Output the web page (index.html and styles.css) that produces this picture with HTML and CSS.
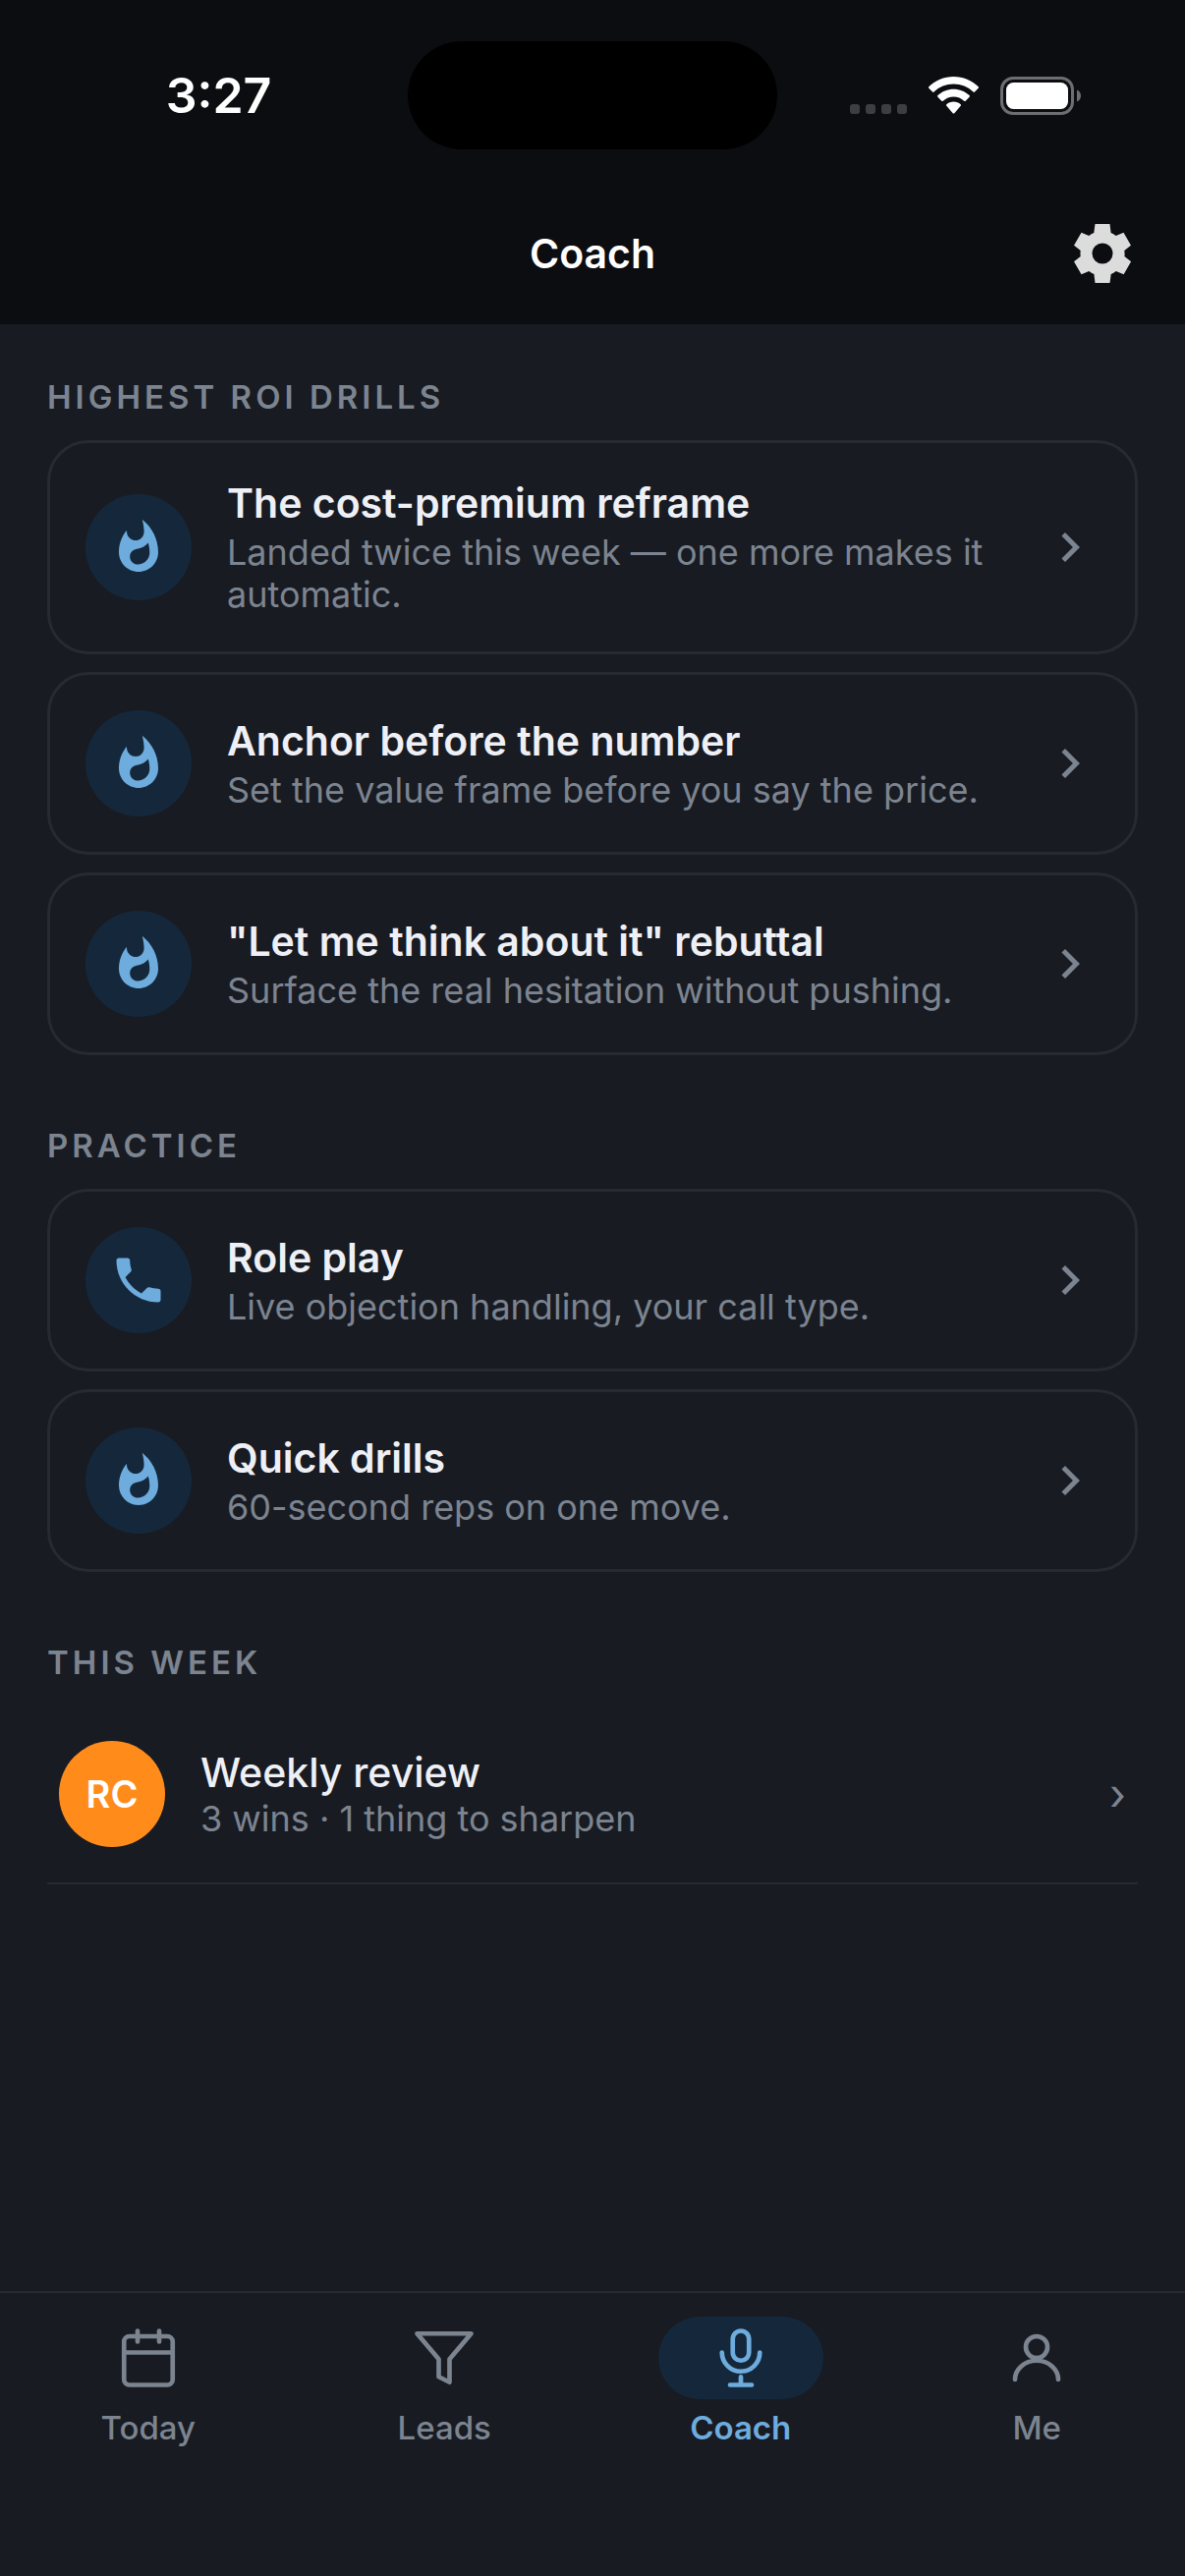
FILE: index.html
```html
<!DOCTYPE html>
<html lang="en">
<head>
    <meta charset="UTF-8">
    <meta name="viewport" content="width=device-width, initial-scale=1.0">
    <title>Coach</title>
    <link rel="stylesheet" href="styles.css">
</head>
<body>
    <!-- Shared icons -->
    <svg class="sprite" aria-hidden="true">
        <symbol id="flame" viewBox="0 0 24 24">
            <path d="M13.5.67s.74 2.65.74 4.8c0 2.06-1.35 3.73-3.41 3.73-2.07 0-3.63-1.67-3.63-3.73l.03-.36C5.21 7.51 4 10.62 4 14c0 4.42 3.58 8 8 8s8-3.58 8-8C20 8.61 17.41 3.8 13.5.67zM11.71 19c-1.78 0-3.22-1.4-3.22-3.14 0-1.62 1.05-2.76 2.81-3.12 1.77-.36 3.6-1.21 4.62-2.58.39 1.29.59 2.65.59 4.04 0 2.65-2.15 4.8-4.8 4.8z"/>
        </symbol>
        <symbol id="phone" viewBox="0 0 24 24">
            <path d="M6.62 10.79c1.44 2.83 3.76 5.14 6.59 6.59l2.2-2.2c.27-.27.67-.36 1.02-.24 1.12.37 2.33.57 3.57.57.55 0 1 .45 1 1V20c0 .55-.45 1-1 1-9.39 0-17-7.61-17-17 0-.55.45-1 1-1h3.5c.55 0 1 .45 1 1 0 1.25.2 2.45.57 3.57.11.35.03.74-.25 1.02l-2.2 2.2z"/>
        </symbol>
        <symbol id="chevron" viewBox="0 0 24 24">
            <path d="M10 6L8.59 7.41 13.17 12l-4.58 4.59L10 18l6-6z"/>
        </symbol>
    </svg>

    <header class="top">
        <div class="status-bar">
            <span class="time">3:27</span>
            <span class="island"></span>
            <span class="status-icons">
                <span class="signal"><i></i><i></i><i></i><i></i></span>
                <svg class="wifi" viewBox="0 0 51 38">
                    <path d="M25.5 0C35.2 0 44.2 3.8 50.7 10.2Q51.4 11 50.7 11.7L47 15.6Q46.3 16.3 45.5 15.6C40.1 10.4 33.1 7.6 25.5 7.6S10.900 10.4 5.5 15.6Q4.7 16.3 4 15.6L.3 11.7Q-.4 11 .3 10.2C6.8 3.8 15.8 0 25.5 0z"/>
                    <path d="M25.5 12.7C31.6 12.7 37.3 15 41.6 19.1Q42.4 19.9 41.6 20.7L37.7 24.7Q37 25.4 36.2 24.7C33.3 22 29.6 20.5 25.5 20.5S17.7 22 14.8 24.7Q14 25.4 13.3 24.7L9.4 20.7Q8.6 19.9 9.4 19.1C13.7 15 19.4 12.7 25.5 12.7z"/>
                    <path d="M25.5 25.4C28.3 25.4 30.8 26.4 32.7 28.2Q33.5 29 32.7 29.8L26.3 37.2Q25.5 38 24.7 37.2L18.3 29.8Q17.5 29 18.3 28.2C20.2 26.4 22.7 25.4 25.5 25.4z"/>
                </svg>
                <svg class="battery" viewBox="0 0 82 39">
                    <rect class="shell" x="1.5" y="1.5" width="72" height="36" rx="11.5"/>
                    <rect x="6" y="6" width="63" height="27" rx="7.5"/>
                    <path class="tip" d="M78 13.5c2.5 1 4 3.3 4 6s-1.5 5-4 6z"/>
                </svg>
            </span>
        </div>
        <div class="title-bar">
            <h1>Coach</h1>
            <button class="settings" aria-label="Settings">
                <svg viewBox="0 0 24 24"><path d="M19.5 12c0-.34-.03-.66-.07-.98l2.23-1.74-2.5-4.33-2.61 1.05c-.52-.4-1.08-.73-1.69-.98L14.5 2h-5l-.4 3.02c-.61.25-1.17.59-1.69.98L4.84 4.95l-2.5 4.33 2.23 1.74c-.04.32-.07.65-.07.98s.03.66.07.98l-2.23 1.74 2.5 4.33 2.61-1.05c.52.4 1.08.73 1.69.98L9.5 22h5l.4-3.02c.61-.25 1.17-.59 1.69-.98l2.61 1.05 2.5-4.33-2.23-1.74c.04-.32.07-.64.07-.98zM12 15.5a3.5 3.5 0 1 1 0-7 3.5 3.5 0 0 1 0 7z"/></svg>
            </button>
        </div>
    </header>

    <main>
        <section>
            <h2>HIGHEST ROI DRILLS</h2>
            <div class="cards">
                <a class="card" href="#">
                    <span class="badge"><svg><use href="#flame"/></svg></span>
                    <span class="text">
                        <strong>The cost-premium reframe</strong>
                        <small>Landed twice this week — one more makes it automatic.</small>
                    </span>
                    <svg class="chevron"><use href="#chevron"/></svg>
                </a>
                <a class="card" href="#">
                    <span class="badge"><svg><use href="#flame"/></svg></span>
                    <span class="text">
                        <strong>Anchor before the number</strong>
                        <small>Set the value frame before you say the price.</small>
                    </span>
                    <svg class="chevron"><use href="#chevron"/></svg>
                </a>
                <a class="card" href="#">
                    <span class="badge"><svg><use href="#flame"/></svg></span>
                    <span class="text">
                        <strong>"Let me think about it" rebuttal</strong>
                        <small>Surface the real hesitation without pushing.</small>
                    </span>
                    <svg class="chevron"><use href="#chevron"/></svg>
                </a>
            </div>
        </section>

        <section>
            <h2>PRACTICE</h2>
            <div class="cards">
                <a class="card" href="#">
                    <span class="badge"><svg><use href="#phone"/></svg></span>
                    <span class="text">
                        <strong>Role play</strong>
                        <small>Live objection handling, your call type.</small>
                    </span>
                    <svg class="chevron"><use href="#chevron"/></svg>
                </a>
                <a class="card" href="#">
                    <span class="badge"><svg><use href="#flame"/></svg></span>
                    <span class="text">
                        <strong>Quick drills</strong>
                        <small>60-second reps on one move.</small>
                    </span>
                    <svg class="chevron"><use href="#chevron"/></svg>
                </a>
            </div>
        </section>

        <section>
            <h2>THIS WEEK</h2>
            <a class="row" href="#">
                <span class="avatar">RC</span>
                <span class="text">
                    <strong>Weekly review</strong>
                    <small>3 wins · 1 thing to sharpen</small>
                </span>
                <span class="more">›</span>
            </a>
        </section>
    </main>

    <nav>
        <a href="#">
            <span class="pill"><svg viewBox="0 0 24 24"><rect x="3" y="4" width="18" height="18" rx="2"/><path d="M8 2v4M16 2v4M3 10h18"/></svg></span>
            Today
        </a>
        <a href="#">
            <span class="pill"><svg viewBox="0 0 24 24"><path d="M22 3H2l8 9.46V19l4 2v-8.54z"/></svg></span>
            Leads
        </a>
        <a class="active" href="#" aria-current="page">
            <span class="pill"><svg viewBox="0 0 24 24"><rect x="9" y="2" width="6" height="11" rx="3"/><path d="M5 10a7 7 0 0 0 14 0M12 19v3M8 22h8"/></svg></span>
            Coach
        </a>
        <a href="#">
            <span class="pill"><svg viewBox="0 0 24 24"><circle cx="12" cy="8" r="4"/><path d="M4 20a8 7 0 0 1 16 0"/></svg></span>
            Me
        </a>
    </nav>
</body>
</html>
```
FILE: styles.css
```css
* {
    box-sizing: border-box;
}
body {
    margin: 0;
    min-height: 100vh;
    display: flex;
    flex-direction: column;
    background: #181b22;
    color: #eef0f6;
    font-family: Inter, "Liberation Sans", sans-serif;
}
a {
    color: inherit;
    text-decoration: none;
}
.sprite {
    display: none;
}

/* Status bar and title */
.top {
    background: #0c0d10;
    color: #fff;
}
.status-bar {
    display: grid;
    grid-template-columns: 1fr 376px 1fr;
    align-items: center;
    padding: 42px 0 34px;
}
.time {
    padding-left: 30px;
    text-align: center;
    font-size: 50px;
    font-weight: 600;
}
.island {
    height: 110px;
    border-radius: 55px;
    background: #000;
}
.status-icons {
    display: flex;
    align-items: center;
    padding-left: 74px;
}
.signal {
    display: flex;
    gap: 6px;
    margin: 28px 22px 0 0;
}
.signal i {
    width: 10px;
    height: 10px;
    border-radius: 3px;
    background: #3d3e41;
}
.wifi {
    width: 51px;
    height: 38px;
    margin-right: 22px;
    fill: #fff;
}
.battery {
    width: 82px;
    height: 39px;
    fill: #fff;
}
.battery .shell {
    fill: none;
    stroke: #6d6e70;
    stroke-width: 3;
}
.battery .tip {
    fill: #6d6e70;
}
.title-bar {
    display: grid;
    grid-template-columns: 1fr auto 1fr;
    align-items: center;
    height: 144px;
    padding: 0 48px;
}
h1 {
    grid-column: 2;
    margin: 0;
    font-size: 41px;
    font-weight: 600;
    line-height: 51px;
}
.settings {
    justify-self: end;
    padding: 0;
    border: 0;
    background: none;
    cursor: pointer;
}
.settings svg {
    display: block;
    width: 72px;
    height: 72px;
    fill: #dcdcdc;
}

/* Content */
main {
    flex: 1;
    display: flex;
    flex-direction: column;
    gap: 72px;
    padding: 54px 48px;
}
h2 {
    margin: 0 0 24px;
    color: #7c8490;
    font-size: 33px;
    font-weight: 600;
    line-height: 40px;
    letter-spacing: 4px;
}
.cards {
    display: flex;
    flex-direction: column;
    gap: 18px;
}
.card {
    display: flex;
    align-items: center;
    gap: 36px;
    padding: 36px;
    border: 3px solid #272a31;
    border-radius: 42px;
}
.badge,
.avatar {
    flex: none;
    display: flex;
    align-items: center;
    justify-content: center;
    width: 108px;
    height: 108px;
    border-radius: 50%;
}
.badge {
    background: #15283b;
}
.badge svg {
    width: 60px;
    height: 60px;
    fill: #6eacde;
}
.text {
    flex: 1;
    display: flex;
    flex-direction: column;
    gap: 3px;
}
.text strong {
    font-size: 41px;
    font-weight: 600;
    line-height: 51px;
}
.text small {
    color: #7c8490;
    font-size: 36px;
    line-height: 43px;
}
.chevron {
    flex: none;
    width: 60px;
    height: 60px;
    fill: #7c8490;
}
.row {
    display: flex;
    align-items: center;
    gap: 36px;
    padding: 36px 12px;
    border-bottom: 2px solid #272a31;
}
.row .text {
    gap: 0;
}
.row strong {
    font-weight: 500;
}
.avatar {
    background: #ff8c1a;
    color: #fff;
    font-size: 38px;
    font-weight: 600;
}
.more {
    color: #7c8490;
    font-size: 44px;
}

/* Tab bar */
nav {
    display: grid;
    grid-template-columns: repeat(4, 1fr);
    padding: 24px 0 131px;
    border-top: 2px solid #272a31;
}
nav a {
    display: flex;
    flex-direction: column;
    align-items: center;
    gap: 9px;
    color: #7c8490;
    font-size: 33px;
    font-weight: 500;
    line-height: 40px;
}
nav .active {
    color: #6eacde;
    font-weight: 600;
}
.pill {
    display: flex;
    align-items: center;
    justify-content: center;
    width: 168px;
    height: 84px;
    border-radius: 42px;
}
.active .pill {
    background: #15283b;
}
.pill svg {
    width: 66px;
    height: 66px;
    fill: none;
    stroke: currentColor;
    stroke-width: 1.7;
    stroke-linecap: round;
    stroke-linejoin: round;
}
```
